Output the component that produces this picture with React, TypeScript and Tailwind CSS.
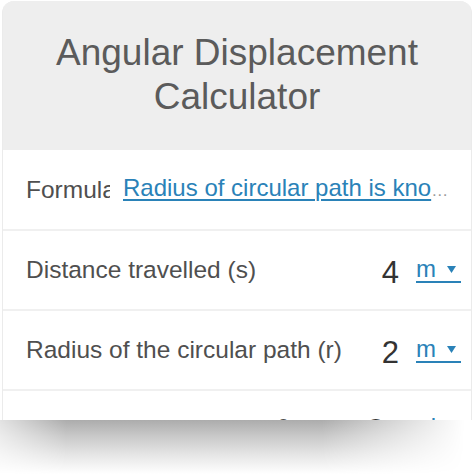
import React from "react";

function Unit({ label }: { label: string }) {
  return (
    <span className="inline-flex items-end border-b-2 border-[#2a82b8] text-[24px] leading-[24px] text-[#2a82b8]">
      <span>{label}</span>
      <svg className="ml-[11px] mr-[5px] mb-[8px]" width="9" height="7" viewBox="0 0 9 7">
        <path d="M0 0 L9 0 L4.5 7 Z" fill="#2a82b8" />
      </svg>
    </span>
  );
}

function ValueRow({
  label,
  value,
  unit,
  lift = false,
}: {
  label: string;
  value: string;
  unit: string;
  lift?: boolean;
}) {
  return (
    <div
      className={
        "flex h-[78px] flex-none items-center bg-white pl-[23px] pr-[10px] " +
        (lift ? "pb-[3px]" : "")
      }
    >
      <span className="flex-1 text-[24.5px] leading-[28px] text-[#4f4f4f]">{label}</span>
      <span className="mt-[5px] text-[31px] leading-[34px] text-[#333333]">{value}</span>
      <span className="ml-[17px]">
        <Unit label={unit} />
      </span>
    </div>
  );
}

export default function App() {
  return (
    <div
      className="flex h-[474px] w-[474px] flex-col overflow-hidden bg-white"
      style={{ fontFamily: '"Liberation Sans", Arial, Helvetica, sans-serif' }}
    >
      <div className="mx-[2px] mt-[1px] flex h-[419px] flex-none flex-col overflow-hidden rounded-t-[12px] border-x border-[#ebebeb] bg-[#f0f0f0]">
        <div className="flex h-[149px] flex-none flex-col items-center justify-center bg-[#eeeeee] pb-[2px] text-center text-[37px] leading-[44px] text-[#5b5b5b]">
          <div>Angular Displacement</div>
          <div>Calculator</div>
        </div>
        <div className="flex h-[79px] flex-none items-center bg-white pl-[23px] pr-[14px]">
          <span className="w-[84px] flex-none overflow-hidden whitespace-nowrap text-[24.5px] leading-[28px] text-[#4f4f4f]">
            Formula
          </span>
          <span className="ml-[13px] min-w-0 flex-1 overflow-hidden text-ellipsis whitespace-nowrap text-[17px] leading-[28px] text-[#9a9a9a]">
            <a className="text-[24px] text-[#2a82b8] underline decoration-[1.5px] underline-offset-[3px]">
              Radius of circular path is known
            </a>
          </span>
        </div>
        <div className="mt-[2px] flex flex-none flex-col gap-[2px]">
          <ValueRow label="Distance travelled (s)" value="4" unit="m" />
          <ValueRow label="Radius of the circular path (r)" value="2" unit="m" />
          <ValueRow label="Angular displacement (θ)" value="2" unit="rad" lift />
        </div>
      </div>
      <div className="flex-1 bg-[linear-gradient(to_bottom,#acacac_0%,#c9c9c9_30%,#e6e6e6_65%,#ffffff_100%)] [mask-image:linear-gradient(to_right,rgba(0,0,0,0.35)_0%,black_14%,black_68%,transparent_98%)]" />
    </div>
  );
}
